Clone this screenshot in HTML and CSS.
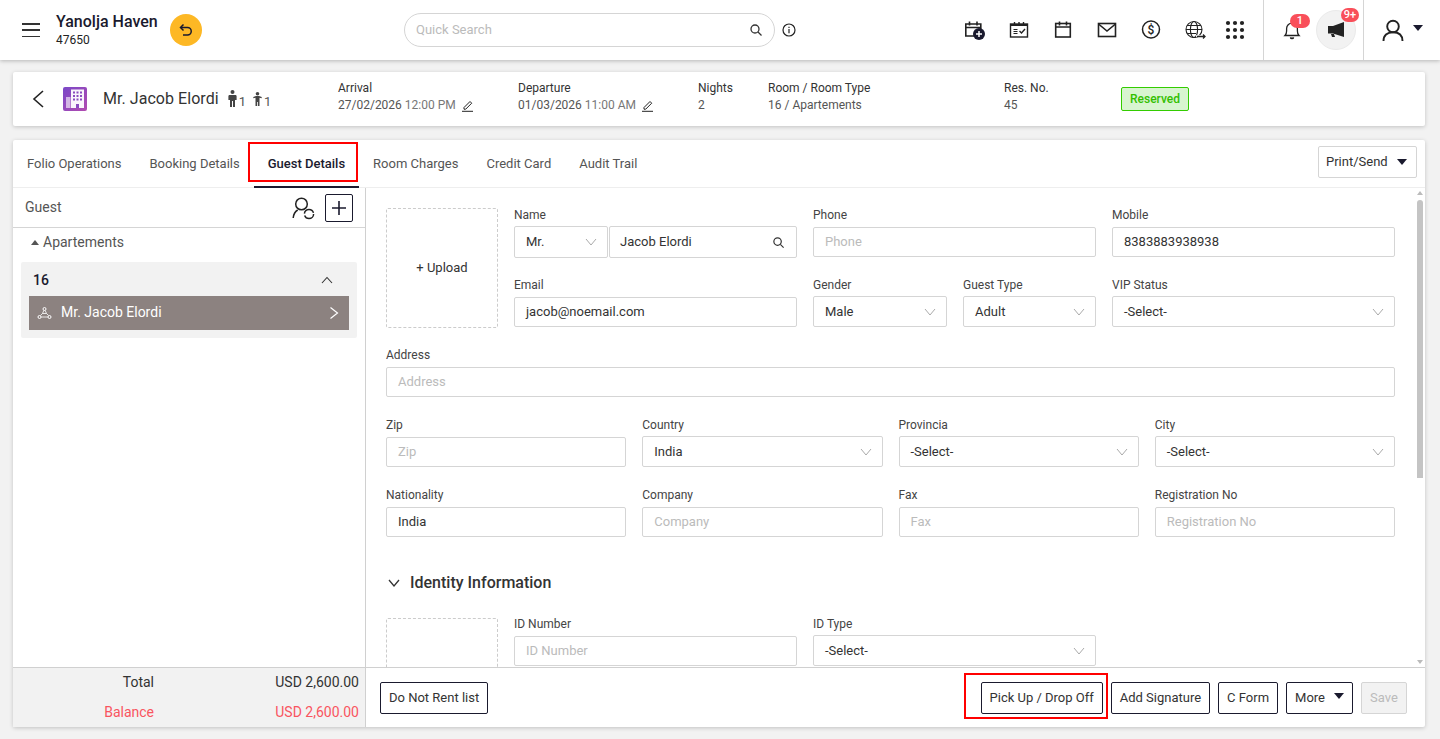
FILE: index.html
```html
<!DOCTYPE html>
<html lang="en">
<head>
<meta charset="utf-8">
<title>Guest Details</title>
<link rel="stylesheet" href="styles.css">
</head>
<body>
<div class="page">
  <header class="topbar">
    <button class="hamburger" aria-label="Menu"><span></span><span></span><span></span></button>
    <div class="brand"><div class="brand-name">Yanolja Haven</div><div class="brand-id">47650</div></div>
    <div class="undo"><svg width="16" height="16" viewBox="0 0 16 16" fill="none" stroke="#1a1a2e" stroke-width="1.5"><path d="M5.5 2.5 2.5 5.5l3 3"/><path d="M3 5.5h6.5a3.2 3.2 0 0 1 0 7.5H5"/></svg></div>
    <div class="search"><span class="search-text">Quick Search</span>
      <svg width="14" height="14" viewBox="0 0 14 14" fill="none" stroke="#333" stroke-width="1.3"><circle cx="6" cy="6" r="4"/><path d="m9 9 3.5 3.5"/></svg>
    </div>
    <div class="info"><svg width="14" height="14" viewBox="0 0 14 14" fill="none" stroke="#222" stroke-width="1.2"><circle cx="7" cy="7" r="6"/><path d="M7 6v4.2M7 3.7v1.3"/></svg></div>
    <div class="tools">
      <div class="tool"><svg width="24" height="24" viewBox="0 0 24 24" fill="none" stroke="#222" stroke-width="1.6"><path d="M11 18H2.800V6h15v5"/><path d="M2.800 9.500h15M6.500 3.500v4M14 3.500v4"/><circle cx="16" cy="16" r="6" fill="#1a1a2e" stroke="none"/><path d="M13 16h6M16 13v6" stroke="#fff" stroke-width="1.5"/></svg></div>
      <div class="tool"><svg width="24" height="24" viewBox="0 0 24 24" fill="none" stroke="#222" stroke-width="1.4"><rect x="3.500" y="6" width="17" height="13"/><path d="M3.500 7h17" stroke-width="2"/><path d="M7.500 4v4M12 4v4M16.500 4v4"/><path d="M6.500 11.500h4M6.500 13.500h4M6.500 15.500h4" stroke-width="1"/><path d="m12.500 13 2 2 3.500-4"/></svg></div>
      <div class="tool"><svg width="24" height="24" viewBox="0 0 24 24" fill="none" stroke="#222" stroke-width="1.6"><rect x="4.700" y="5.500" width="14.600" height="13.500"/><path d="M4.700 9h14.600M8.500 3.500v4M15.500 3.500v4"/></svg></div>
      <div class="tool"><svg width="24" height="24" viewBox="0 0 24 24" fill="none" stroke="#222" stroke-width="1.6"><rect x="3.500" y="5.500" width="17" height="13"/><path d="m3.500 6 8.500 7 8.500-7"/></svg></div>
      <div class="tool"><svg width="24" height="24" viewBox="0 0 24 24" fill="none" stroke="#222" stroke-width="1.5"><circle cx="12" cy="11.500" r="8.500"/><text x="12" y="15.600" text-anchor="middle" class="dollar">$</text></svg></div>
      <div class="tool"><svg width="24" height="24" viewBox="0 0 24 24" fill="none" stroke="#222" stroke-width="1.1"><circle cx="11" cy="11.500" r="8"/><ellipse cx="11" cy="11.500" rx="3.600" ry="8"/><path d="M3 11.500h16M4 7.500h14M4 15.500h9"/><path d="M13 18h9" stroke-width="1.600" stroke="#fff"/><path d="M14 18.500h8M20 16.500l2 2-2 2" stroke-width="1.300"/></svg></div>
      <div class="tool tool-last"><svg width="24" height="24" viewBox="0 0 24 24" fill="#222"><circle cx="5" cy="5" r="2.100"/><circle cx="12" cy="5" r="2.100"/><circle cx="19" cy="5" r="2.100"/><circle cx="5" cy="12" r="2.100"/><circle cx="12" cy="12" r="2.100"/><circle cx="19" cy="12" r="2.100"/><circle cx="5" cy="19" r="2.100"/><circle cx="12" cy="19" r="2.100"/><circle cx="19" cy="19" r="2.100"/></svg></div>
    </div>
    <div class="alerts">
      <div class="bell"><svg width="20" height="22" viewBox="0 0 20 22" fill="none" stroke="#222" stroke-width="1.3"><path d="M3 16.500c1.300-1.200 1.600-2.200 1.600-4.500V9.500a5.400 5.400 0 0 1 10.800 0V12c0 2.300.3 3.300 1.600 4.500z"/><path d="M8.300 18.500a1.800 1.800 0 0 0 3.400 0" fill="#222"/></svg><span class="badge badge-bell">1</span></div>
      <div class="mega"><svg width="20" height="18" viewBox="0 0 20 18" fill="#222"><path d="M18 1v15L7 12.500H2V5h5z"/><path d="M5 13h3l1 3H6z"/></svg><span class="badge badge-mega">9+</span></div>
    </div>
    <div class="account">
      <svg width="24" height="24" viewBox="0 0 24 24" fill="none" stroke="#222" stroke-width="1.9"><circle cx="12" cy="8.500" r="5.800"/><path d="M2.500 23c0-5.500 3.500-8.800 9.500-8.800s9.500 3.300 9.500 8.800"/></svg>
      <span class="caret caret-lg"></span>
    </div>
  </header>

  <main class="content">
    <section class="res-card">
      <svg class="back" width="14" height="18" viewBox="0 0 14 18" fill="none" stroke="#222" stroke-width="1.6"><path d="M12 1 3 9l9 8"/></svg>
      <svg class="hotel" width="24" height="24" viewBox="0 0 24 24"><defs><linearGradient id="hg" x1="0" y1="0" x2="1" y2="1"><stop offset="0" stop-color="#7a48c8"/><stop offset="1" stop-color="#b24bb0"/></linearGradient></defs><rect width="24" height="24" rx="2" fill="url(#hg)"/><path fill="#fff" d="M8 2.500h13V21H8z" opacity=".95"/><path fill="#fff" opacity=".6" d="M3 10h4.500v11H3z"/><g fill="#8a4cc0"><rect x="10" y="4.500" width="2" height="2"/><rect x="13.500" y="4.500" width="2" height="2"/><rect x="17" y="4.500" width="2" height="2"/><rect x="10" y="8" width="2" height="2"/><rect x="13.500" y="8" width="2" height="2"/><rect x="17" y="8" width="2" height="2"/><rect x="10" y="11.500" width="2" height="2"/><rect x="13.500" y="11.500" width="2" height="2"/><rect x="17" y="11.500" width="2" height="2"/><rect x="13" y="17" width="3" height="4"/></g></svg>
      <div class="guest-block">
        <span class="guest-name">Mr. Jacob Elordi</span>
        <svg class="adult" width="9" height="17" viewBox="0 0 9 17" fill="#444"><circle cx="4.500" cy="2" r="2"/><path d="M1.200 5h6.600l.8.800V10H7v7H5V11H4v6H2v-7H.4V5.800z"/></svg><span class="count">1</span>
        <svg class="child" width="9" height="14" viewBox="0 0 9 14" fill="#444"><circle cx="4.500" cy="1.800" r="1.800"/><path d="M.3 5 3 4h3l2.700 1v1.200L6.500 5.800V14H4.900V10h-.8v4H2.500V5.800L.3 6.200z"/></svg><span class="count">1</span>
      </div>
      <div class="meta meta-arrival"><div class="meta-label">Arrival</div><div class="meta-value">27/02/2026 <span class="time">12:00 PM</span><svg class="pen" width="13" height="13" viewBox="0 0 13 13" fill="none" stroke="#222" stroke-width="1"><path d="M3 8.500 9 2.500l1.700 1.700-6 6H3zM1 12.300h11"/></svg></div></div>
      <div class="meta meta-arrival"><div class="meta-label">Departure</div><div class="meta-value">01/03/2026 <span class="time">11:00 AM</span><svg class="pen" width="13" height="13" viewBox="0 0 13 13" fill="none" stroke="#222" stroke-width="1"><path d="M3 8.500 9 2.500l1.700 1.700-6 6H3zM1 12.300h11"/></svg></div></div>
      <div class="meta meta-nights"><div class="meta-label">Nights</div><div class="meta-value">2</div></div>
      <div class="meta meta-room"><div class="meta-label">Room / Room Type</div><div class="meta-value">16 / Apartements</div></div>
      <div class="meta meta-res"><div class="meta-label">Res. No.</div><div class="meta-value">45</div></div>
      <div class="status">Reserved</div>
    </section>

    <section class="main-card">
      <nav class="tabs">
        <a class="tab">Folio Operations</a>
        <a class="tab">Booking Details</a>
        <a class="tab tab-active">Guest Details</a>
        <a class="tab">Room Charges</a>
        <a class="tab">Credit Card</a>
        <a class="tab">Audit Trail</a>
        <button class="print">Print/Send<span class="caret"></span></button>
      </nav>
      <div class="workspace">
        <aside class="side">
          <div class="side-head">
            <span>Guest</span>
            <svg class="sync" width="24" height="24" viewBox="0 0 24 24" fill="none" stroke="#222" stroke-width="1.5"><circle cx="9.500" cy="8" r="5.800"/><path d="M1.200 22c.3-3.800 2-6.400 4.500-8"/><circle cx="17" cy="18" r="4.600" stroke-dasharray="12.500 1.950"/></svg>
            <button class="add" aria-label="Add"><svg width="16" height="16" viewBox="0 0 16 16" stroke="#1a1a2e" stroke-width="1.6"><path d="M8 1v14M1 8h14"/></svg></button>
          </div>
          <div class="room-type"><span class="tri"></span>Apartements</div>
          <div class="room-group">
            <div class="room-no"><span>16</span><svg width="12" height="8" viewBox="0 0 12 8" fill="none" stroke="#333" stroke-width="1.100"><path d="m1 7 5-5.500L11 7"/></svg></div>
            <div class="room-guest">
              <svg width="15" height="14" viewBox="0 0 15 14" fill="none" stroke="#fff" stroke-width="1"><circle cx="7.500" cy="3" r="1.500"/><circle cx="2.500" cy="11" r="1.500"/><circle cx="12.500" cy="11" r="1.500"/><path d="M6.800 4.500 5.500 7.500l-2 2M8.200 4.500l1.300 3 2 2M5.500 7.500h4M4 11h7" stroke-width=".8"/></svg>
              <span class="room-guest-name">Mr. Jacob Elordi</span>
              <svg width="10" height="14" viewBox="0 0 10 14" fill="none" stroke="#fff" stroke-width="1.200"><path d="m1.500 1.500 7 5.500-7 5.500"/></svg>
            </div>
          </div>
        </aside>
        <div class="form-wrap">
          <form class="form">
            <div class="form-top">
              <div class="upload">+ Upload</div>
              <div class="grid-top">
                <div class="field"><label class="lbl">Name</label>
                  <div class="name-group">
                    <div class="input select name-title">Mr.<svg class="chev" width="12" height="8" viewBox="0 0 12 8" fill="none" stroke="#aaa"><path d="m1 1 5 6 5-6"/></svg></div>
                    <div class="input name-input">Jacob Elordi<svg width="13" height="13" viewBox="0 0 14 14" fill="none" stroke="#333" stroke-width="1.300"><circle cx="6" cy="6" r="4"/><path d="m9 9 3.500 3.500"/></svg></div>
                  </div>
                </div>
                <div class="field"><label class="lbl">Phone</label><div class="input ph">Phone</div></div>
                <div class="field"><label class="lbl">Mobile</label><div class="input">8383883938938</div></div>
                <div class="field"><label class="lbl">Email</label><div class="input">jacob@noemail.com</div></div>
                <div class="split">
                  <div class="field"><label class="lbl">Gender</label><div class="input select">Male<svg class="chev" width="12" height="8" viewBox="0 0 12 8" fill="none" stroke="#aaa"><path d="m1 1 5 6 5-6"/></svg></div></div>
                  <div class="field"><label class="lbl">Guest Type</label><div class="input select">Adult<svg class="chev" width="12" height="8" viewBox="0 0 12 8" fill="none" stroke="#aaa"><path d="m1 1 5 6 5-6"/></svg></div></div>
                </div>
                <div class="field"><label class="lbl">VIP Status</label><div class="input select">-Select-<svg class="chev" width="12" height="8" viewBox="0 0 12 8" fill="none" stroke="#aaa"><path d="m1 1 5 6 5-6"/></svg></div></div>
              </div>
            </div>
            <div class="field field-row"><label class="lbl">Address</label><div class="input ph">Address</div></div>
            <div class="grid-four">
              <div class="field"><label class="lbl">Zip</label><div class="input ph">Zip</div></div>
              <div class="field"><label class="lbl">Country</label><div class="input select">India<svg class="chev" width="12" height="8" viewBox="0 0 12 8" fill="none" stroke="#aaa"><path d="m1 1 5 6 5-6"/></svg></div></div>
              <div class="field"><label class="lbl">Provincia</label><div class="input select">-Select-<svg class="chev" width="12" height="8" viewBox="0 0 12 8" fill="none" stroke="#aaa"><path d="m1 1 5 6 5-6"/></svg></div></div>
              <div class="field"><label class="lbl">City</label><div class="input select">-Select-<svg class="chev" width="12" height="8" viewBox="0 0 12 8" fill="none" stroke="#aaa"><path d="m1 1 5 6 5-6"/></svg></div></div>
              <div class="field"><label class="lbl">Nationality</label><div class="input">India</div></div>
              <div class="field"><label class="lbl">Company</label><div class="input ph">Company</div></div>
              <div class="field"><label class="lbl">Fax</label><div class="input ph">Fax</div></div>
              <div class="field"><label class="lbl">Registration No</label><div class="input ph">Registration No</div></div>
            </div>
            <h3 class="section-title"><svg width="12" height="8" viewBox="0 0 12 8" fill="none" stroke="#333" stroke-width="1.300"><path d="m1 1 5 6 5-6"/></svg>Identity Information</h3>
            <div class="form-top">
              <div class="upload upload-id"></div>
              <div class="grid-top">
                <div class="field"><label class="lbl">ID Number</label><div class="input ph">ID Number</div></div>
                <div class="field"><label class="lbl">ID Type</label><div class="input select">-Select-<svg class="chev" width="12" height="8" viewBox="0 0 12 8" fill="none" stroke="#aaa"><path d="m1 1 5 6 5-6"/></svg></div></div>
              </div>
            </div>
          </form>
          <div class="scrollbar"><span class="arrow-up"></span><span class="thumb"></span><span class="arrow-down"></span></div>
        </div>
      </div>
      <footer class="foot">
        <div class="totals">
          <div class="total-row"><span class="total-label">Total</span><span>USD 2,600.00</span></div>
          <div class="total-row total-red"><span class="total-label">Balance</span><span>USD 2,600.00</span></div>
        </div>
        <div class="actions">
          <button class="btn">Do Not Rent list</button>
          <div class="highlight"><button class="btn">Pick Up / Drop Off</button></div>
          <button class="btn btn-sig">Add Signature</button>
          <button class="btn">C Form</button>
          <button class="btn">More<span class="caret"></span></button>
          <button class="btn btn-off">Save</button>
        </div>
      </footer>
    </section>
  </main>
</div>
</body>
</html>
```
FILE: styles.css
```css
* { box-sizing: border-box; }
html, body { margin: 0; height: 100%; overflow: hidden; }
body { background: #f2f2f2; color: #333; font: 13px/1.2 Roboto, "Liberation Sans", sans-serif; }
button { font: inherit; cursor: pointer; background: #fff; }
.page { height: 739px; display: flex; flex-direction: column; }

.topbar { height: 60px; flex: none; background: #fff; box-shadow: 0 1px 4px rgba(0,0,0,.25); display: flex; align-items: center; padding-left: 22px; position: relative; z-index: 2; }
.hamburger { width: 18px; height: 14px; padding: 0; border: 0; display: flex; flex-direction: column; justify-content: space-between; margin-right: 16px; }
.hamburger span { display: block; height: 1.5px; background: #333; }
.brand { width: 102px; }
.brand-name { font-size: 16px; font-weight: 500; line-height: 20px; color: #1a1a2e; white-space: nowrap; }
.brand-id { font-size: 12px; line-height: 16px; color: #222; }
.undo { width: 32px; height: 32px; border-radius: 50%; background: #fdb825; margin-left: 12px; display: flex; align-items: center; justify-content: center; }
.search { width: 371px; height: 34px; margin-left: 202px; border: 1px solid #d5d5d5; border-radius: 17px; display: flex; align-items: center; justify-content: space-between; padding: 0 11px; }
.search-text { color: #bbb; }
.info { margin-left: 7px; width: 14px; height: 14px; display: flex; }
.tools { display: flex; margin-left: 157px; }
.tool { width: 44px; height: 24px; display: flex; justify-content: center; margin-top: -1px; }
.tool-last { padding-right: 8px; }
.dollar { font: 500 12px Roboto, sans-serif; fill: #222; stroke: none; }
.alerts { margin-left: 2px; height: 60px; width: 101px; border-left: 1px solid #d5d5d5; border-right: 1px solid #d5d5d5; display: flex; align-items: center; padding-left: 18px; }
.bell { width: 20px; height: 22px; position: relative; margin-right: 14px; }
.badge { position: absolute; height: 14px; border-radius: 7px; background: #f94f5a; color: #fff; font-size: 11px; font-weight: 500; line-height: 14px; text-align: center; }
.badge-bell { left: 8px; top: -5px; width: 20px; }
.mega { width: 40px; height: 40px; border-radius: 50%; background: #f2f2f2; border: 1px solid #eaeaea; position: relative; display: flex; align-items: center; justify-content: center; }
.badge-mega { left: 24px; top: -3px; width: 18px; }
.account { display: flex; align-items: center; padding-left: 17px; }
.caret { display: inline-block; width: 0; height: 0; border-left: 5px solid transparent; border-right: 5px solid transparent; border-top: 6px solid #1a1a2e; }
.caret-lg { margin-left: 8px; margin-top: -5px; }

.content { flex: 1; min-height: 0; padding: 12px 15px 12px 13px; display: flex; flex-direction: column; gap: 14px; }
.res-card { height: 54px; flex: none; background: #fff; border-radius: 2px; box-shadow: 0 1px 4px rgba(0,0,0,.2); display: flex; align-items: center; padding-left: 18px; }
.back { margin-right: 18px; }
.hotel { margin-right: 16px; }
.guest-block { width: 235px; display: flex; align-items: center; flex: none; }
.guest-name { font-size: 16px; color: #333; margin-right: 9px; white-space: nowrap; letter-spacing: .05px; }
.adult { margin-top: -1px; }
.child { margin-left: 7px; }
.count { font-size: 13px; color: #555; margin: 6px 0 0 2px; }
.meta { flex: none; line-height: 17px; font-size: 12px; color: #333; margin-top: -4px; }
.meta-label { color: #333; }
.meta-value { color: #555; display: flex; align-items: center; white-space: pre; }
.time { color: #777; }
.pen { margin-left: 5px; }
.meta-arrival { width: 180px; }
.meta-nights { width: 70px; }
.meta-room { width: 236px; }
.meta-res { width: 117px; }
.status { width: 68px; height: 24px; background: #d8f5d0; border: 1px solid #33cc00; border-radius: 2px; color: #33c000; font-size: 12px; font-weight: 500; line-height: 22px; text-align: center; }

.main-card { flex: 1; min-height: 0; background: #fff; border-radius: 2px; box-shadow: 0 1px 4px rgba(0,0,0,.2); display: flex; flex-direction: column; }
.tabs { height: 48px; flex: none; display: flex; align-items: center; gap: 28px; padding: 0 8px 0 14px; border-bottom: 1px solid #eee; }
.tab { color: #555; position: relative; white-space: nowrap; margin-top: 1px; }
.tab-active { color: #1a1a2e; font-weight: 500; }
.tab-active::before { content: ""; box-sizing: border-box; position: absolute; left: -20px; right: -13px; top: -14px; height: 40px; border: 2px solid #f00; }
.tab-active::after { content: ""; position: absolute; left: -14px; right: -14px; top: 30px; height: 2px; background: #1a1a2e; }
.print { margin-left: auto; width: 99px; height: 32px; margin-top: -4px; border: 1px solid #d5d5d5; border-radius: 2px; color: #333; display: flex; align-items: center; justify-content: space-between; padding: 0 9px 0 7px; }

.workspace { flex: 1; min-height: 0; display: flex; }
.side { width: 353px; flex: none; border-right: 1px solid #d0d0d0; }
.side-head { height: 40px; border-bottom: 1px solid #d5d5d5; display: flex; align-items: center; padding: 0 12px; font-size: 14px; color: #555; }
.side-head span { margin-right: auto; }
.sync { margin-right: 9px; }
.add { width: 28px; height: 28px; padding: 0; border: 1px solid #1a1a2e; border-radius: 2px; display: flex; align-items: center; justify-content: center; }
.room-type { height: 34px; display: flex; align-items: center; padding: 0 0 6px 18px; font-size: 14px; color: #555; }
.tri { width: 0; height: 0; border-left: 4px solid transparent; border-right: 4px solid transparent; border-bottom: 5px solid #555; margin-right: 4px; }
.room-group { margin: 0 8px; background: #f2f2f2; border-radius: 2px; padding: 0 8px 8px; height: 76px; }
.room-no { height: 34px; display: flex; align-items: center; justify-content: space-between; padding: 2px 16px 0 4px; font-size: 14px; font-weight: 500; color: #1a1a2e; }
.room-guest { height: 34px; background: #8c8280; color: #fff; display: flex; align-items: center; padding: 0 10px 1px 8px; font-size: 14px; }
.room-guest-name { margin-left: 9px; margin-right: auto; }

.form-wrap { flex: 1; min-width: 0; display: flex; }
.form { flex: 1; min-width: 0; height: 479px; overflow: hidden; padding: 19px 21px 0 20px; }
.form-top { display: flex; gap: 16px; }
.upload { width: 112px; height: 120px; flex: none; margin-top: 1px; border: 1px dashed #ccc; border-radius: 2px; display: flex; align-items: center; justify-content: center; color: #333; }
.grid-top { flex: 1; display: grid; grid-template-columns: repeat(3, 1fr); grid-auto-rows: 50px; gap: 20px 16px; }
.split { display: grid; grid-template-columns: 134px 133px; gap: 16px; }
.grid-four { display: grid; grid-template-columns: repeat(4, 1fr); grid-auto-rows: 50px; gap: 20px 16px; }
.field { min-width: 0; }
.field-row { height: 50px; margin: 19px 0 20px; }
.lbl { display: block; height: 16px; line-height: 16px; font-size: 12px; color: #444; margin-bottom: 4px; white-space: nowrap; }
.input { height: 30px; border: 1px solid #d5d5d5; border-radius: 2px; padding: 0 11px; display: flex; align-items: center; justify-content: space-between; color: #333; white-space: nowrap; }
.ph { color: #bbb; }
.select { height: 31px; margin-top: -1px; }
.chev { margin-right: -1px; }
.name-group { display: flex; gap: 1px; margin-top: -1px; }
.name-group .input { height: 32px; margin: 0; }
.name-title { width: 94px; flex: none; }
.name-input { flex: 1; padding: 0 11px 0 10px; }
.section-title { height: 24px; margin: 34px 0 21px 2px; display: flex; align-items: center; gap: 10px; font-size: 16px; font-weight: 500; color: #333; line-height: 24px; }
.upload-id { margin-top: 2px; }
.scrollbar { width: 8px; height: 479px; flex: none; margin-right: 1px; display: flex; flex-direction: column; align-items: center; padding-top: 3px; }
.arrow-up { width: 0; height: 0; border: 3px solid transparent; border-top: 0; border-bottom: 4px solid #bbb; }
.thumb { width: 6px; height: 278px; margin-top: 5px; background: #c4c4c4; border-radius: 3px 3px 0 0; }
.arrow-down { width: 0; height: 0; border: 3px solid transparent; border-bottom: 0; border-top: 4px solid #bbb; margin-top: auto; margin-bottom: 3px; }

.foot { height: 60px; flex: none; display: flex; border-top: 1px solid #d0d0d0; }
.totals { width: 353px; flex: none; background: #f2f2f2; border-right: 1px solid #d0d0d0; padding: 0 6px 2px 0; display: flex; flex-direction: column; justify-content: center; gap: 12px; font-size: 14px; }
.total-row { display: flex; justify-content: space-between; color: #333; line-height: 18px; }
.total-label { width: 141px; text-align: right; }
.total-red { color: #f9555f; }
.actions { flex: 1; display: flex; align-items: center; padding: 0 18px 0 14px; }
.btn { height: 32px; padding: 0 8px; border: 1px solid #1a1a2e; border-radius: 2px; color: #333; white-space: nowrap; display: flex; align-items: center; margin-left: 8px; }
.actions > .btn:first-child { margin-left: 0; }
.highlight { margin: -3px -5px 0 auto; width: 144px; flex: none; height: 46px; padding: 3px 3px 0 15px; border: 2px solid #f00; display: flex; align-items: center; }
.highlight .btn { margin: 0; width: 122px; justify-content: center; padding: 0; }
.btn .caret { margin-left: 9px; margin-top: -4px; }
.btn-off { background: #f2f2f2; border-color: #d5d5d5; color: #bbb; width: 46px; justify-content: center; }
```
